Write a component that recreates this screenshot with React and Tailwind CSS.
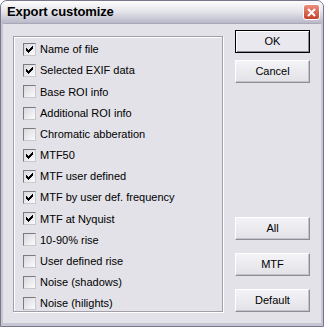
const items = [
  ['Name of file', true],
  ['Selected EXIF data', true],
  ['Base ROI info', false],
  ['Additional ROI info', false],
  ['Chromatic abberation', false],
  ['MTF50', true],
  ['MTF user defined', true],
  ['MTF by user def. frequency', true],
  ['MTF at Nyquist', true],
  ['10-90% rise', false],
  ['User defined rise', false],
  ['Noise (shadows)', false],
  ['Noise (hilights)', false],
];

// classic 7x7 check mark, drawn pixel by pixel
const checkCols = [
  [2, 4], [3, 5], [4, 6], [5, 5], [6, 4], [7, 3], [8, 2],
];

function CheckBox({ checked }) {
  return (
    <div className="w-[13px] h-[13px] shrink-0 border border-t-[#7a7a80] border-l-[#7a7a80] border-b-[#c9c8cf] border-r-[#c9c8cf] bg-gradient-to-br from-[#d9d8de] to-[#fbfbfc]">
      {checked && (
        <svg width="11" height="11" viewBox="0 0 11 11" shapeRendering="crispEdges">
          {checkCols.map(([x, y], i) => (
            <rect key={i} x={x} y={y} width="1" height="3" fill="#000" />
          ))}
        </svg>
      )}
    </div>
  );
}

function Button({ children, def }) {
  return (
    <div
      className={
        'h-[23px] w-[75px] flex items-center justify-center text-[11px] text-black ' +
        (def
          ? 'border border-black shadow-[inset_1px_1px_0_#fff,inset_-1px_-1px_0_#8e8d96] bg-[#e9e8ee]'
          : 'border border-t-white border-l-white border-b-[#8e8d96] border-r-[#8e8d96] shadow-[inset_-1px_-1px_0_#c4c3cb] bg-gradient-to-b from-[#f4f4f7] to-[#e2e1e7]')
      }
    >
      {children}
    </div>
  );
}

export default function App() {
  return (
    <div className="w-[324px] h-[327px] flex flex-col bg-[#c6c5d3] border border-[#77768a] rounded-t-[7px] overflow-hidden font-['Liberation_Sans',Arial,sans-serif]">
      <div className="h-[22px] shrink-0 flex items-center justify-between pl-[6px] pr-[3px] bg-gradient-to-b from-[#fdfdfe] via-[#e3e3ea] to-[#b9b8c9]">
        <span className="text-[13px] font-bold text-black tracking-[-0.1px]">Export customize</span>
        <div className="w-[17px] h-[16px] rounded-[3px] border border-white bg-gradient-to-b from-[#eb8e7a] to-[#c6412c] flex items-center justify-center">
          <svg width="9" height="9" viewBox="0 0 9 9">
            <path d="M1 1L8 8M8 1L1 8" stroke="#fff" strokeWidth="2" />
          </svg>
        </div>
      </div>
      <div className="flex-1 mx-[2px] mb-[3px] bg-[#e3e2e8] border-t border-[#a9a8b6] flex items-start pl-[10px] pt-[12px]">
        <div className="w-[210px] h-[276px] shrink-0 border border-[#a09fa8] shadow-[1px_1px_0_#fff,inset_1px_1px_0_#fff] pl-[9px] pt-[2px]">
          {items.map(([label, checked]) => (
            <div key={label} className="h-[21.17px] flex items-center gap-[4px]">
              <CheckBox checked={checked} />
              <span className="text-[11px] text-black whitespace-nowrap">{label}</span>
            </div>
          ))}
        </div>
        <div className="ml-[12px] -mt-[6px] h-[282px] flex flex-col justify-between">
          <div className="flex flex-col gap-[7px]">
            <Button def>OK</Button>
            <Button>Cancel</Button>
          </div>
          <div className="flex flex-col gap-[13px]">
            <Button>All</Button>
            <Button>MTF</Button>
            <Button>Default</Button>
          </div>
        </div>
      </div>
    </div>
  );
}
